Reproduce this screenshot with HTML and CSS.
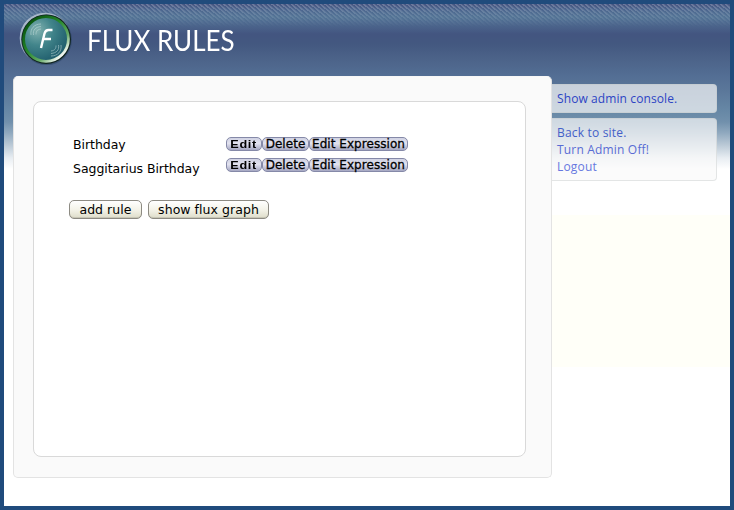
FILE: index.html
```html
<!DOCTYPE html>
<html lang="en">
<head>
<meta charset="utf-8">
<title>Flux Rules</title>
<link rel="stylesheet" href="styles.css">
</head>
<body>
<div class="page">
  <header class="header">
    <svg class="logo" viewBox="0 0 56 56" aria-hidden="true">
      <defs>
        <radialGradient id="glass" cx=".3" cy=".3" r=".75">
          <stop offset="0" stop-color="#82b2b0"/><stop offset=".45" stop-color="#42858b"/><stop offset="1" stop-color="#1f5d6c"/>
        </radialGradient>
        <linearGradient id="rim" x1=".1" y1=".1" x2=".85" y2=".9">
          <stop offset="0" stop-color="#07520d"/><stop offset=".45" stop-color="#27892c"/><stop offset=".75" stop-color="#65aa68"/><stop offset="1" stop-color="#fff"/>
        </linearGradient>
      </defs>
      <circle cx="27" cy="27" r="25.3" fill="#a9b8ca"/>
      <circle cx="28.6" cy="28.8" r="25.3" fill="#263f60" opacity=".55"/>
      <circle cx="28.2" cy="28.2" r="24.8" fill="#10251f"/>
      <circle cx="28" cy="28" r="22.4" fill="url(#glass)" stroke="url(#rim)" stroke-width="2.8"/>
      <g fill="none" stroke="#c5dedd" stroke-width=".9" opacity=".6">
        <path d="M13 24c-1-6 3-11 10-11"/><path d="M15.5 24c-1-5 2-8 7.5-8.5"/><path d="M18 23.5c0-3 1-5 5-5.5"/>
        <path d="M43 34c1 6-3 11-10 11"/><path d="M40.5 34c1 5-2 8-7.5 8.5"/><path d="M38 34.5c0 3-1 5-5 5.5"/>
      </g>
      <path d="M34.5 19h-4q-3 0-4 3.500L23 37M25.500 28h7.500" fill="none" stroke="#fff" stroke-width="2.400"/>
    </svg>
    <h1 class="title">FLUX RULES</h1>
  </header>
  <div class="columns">
    <main class="panel">
      <section class="content">
        <div class="rule"><span class="name">Birthday</span><span class="actions"><a class="pill edit"><span>Edit</span></a><a class="pill delete">Delete</a><a class="pill expression">Edit Expression</a></span></div>
        <div class="rule second"><span class="name">Saggitarius Birthday</span><span class="actions"><a class="pill edit"><span>Edit</span></a><a class="pill delete">Delete</a><a class="pill expression">Edit Expression</a></span></div>
        <div class="buttons"><button class="add">add rule</button><button class="graph">show flux graph</button></div>
      </section>
    </main>
    <aside class="side">
      <nav class="box console"><a>Show admin console.</a></nav>
      <nav class="box links"><a>Back to site.</a><a>Turn Admin Off!</a><a>Logout</a></nav>
      <div class="band"></div>
    </aside>
  </div>
</div>
</body>
</html>
```
FILE: styles.css
```css
* { box-sizing: border-box; }
body { margin: 0; background: #204b7c; }
.page {
  position: relative;
  width: 734px; height: 510px; overflow: hidden;
  border: 4px solid #204b7c;
  background: linear-gradient(#485783 0, #506b92 6px, #567798 13px, #4c668d 21px, #435580 30px, #435880 40px, #4c6389 55px, #536e94 72px, #5a7699 85px, #6687a5 106px, #7190ac 118px, #90a9bf 129px, #bac9d6 141px, #e8edf2 154px, #fff 165px);
}
.page::before {
  content: ""; position: absolute; left: 0; top: 0; width: 100%; height: 23px;
  background: repeating-linear-gradient(40deg, rgba(255,255,255,.2) 0 1px, rgba(40,60,110,.1) 2px 3.1px);
  -webkit-mask-image: linear-gradient(#000, transparent);
  mask-image: linear-gradient(#000, transparent);
}
.header { position: relative; height: 72px; display: flex; align-items: flex-start; }
.logo { width: 56px; height: 56px; margin: 7px 0 0 14px; }
.title {
  margin: 19px 0 0 12.5px; color: #fff; white-space: nowrap;
  font: 400 28px/34px Lato, sans-serif;
  transform: scaleX(.927); transform-origin: 0 0;
}
.columns { display: flex; align-items: flex-start; }
.panel {
  width: 539px; height: 402px; margin-left: 9px; padding: 24px 0 0 19px;
  background: #fafafa; border: 1px solid #e3e3e3; border-top-color: #f7f7f7; border-radius: 5px;
}
.content {
  width: 493px; height: 356px; padding: 34px 0 0 35px;
  background: #fff; border: 1px solid #d9d9d9; border-radius: 8px;
  color: #000; font: 12.5px/18px "DejaVu Sans", sans-serif;
}
.rule { display: flex; height: 22px; align-items: flex-start; }
.name { width: 153px; margin-left: 4px; white-space: nowrap; letter-spacing: -.05px; }
.second .name { padding-top: 2px; }
.actions { display: flex; padding-top: 1px; }
.second .actions { padding-top: 0; }
.pill {
  display: flex; justify-content: center;
  height: 14px; white-space: nowrap;
  border: 1px solid #8589a8; border-radius: 5px;
  background: linear-gradient(#d0d2e3, #e2e2ef 45%, #a5a7c2);
  font: 12px/12px "DejaVu Sans", sans-serif; letter-spacing: .05px; color: #000; -webkit-text-stroke: .3px #000;
}
.edit { width: 36px; font: bold 11px/12px "Liberation Sans", sans-serif; letter-spacing: .6px; -webkit-text-stroke: 0; }
.edit span { transform: scaleX(1.15); }
.delete { width: 47px; }
.expression { width: 99px; }
.buttons { display: flex; gap: 6px; margin-top: 20px; }
button {
  height: 19px; padding: 0; white-space: nowrap;
  border: 1px solid #8d8b83; border-radius: 5px;
  background: linear-gradient(#fff, #f4f3e9 50%, #deddca);
  box-shadow: inset 0 -1px #c8c6b6;
  font: 12.5px/17px "DejaVu Sans", sans-serif; letter-spacing: .05px; color: #000;
}
.add { width: 73px; }
.graph { width: 121px; }
.side { width: 178px; padding-top: 8px; }
.box {
  width: 165px; border: 1px solid rgba(190,194,195,.4); border-left: 0; border-radius: 0 4px 4px 0;
  background: rgba(250,250,250,.7); padding-left: 5px;
  font: 12px/17px "Open Sans", sans-serif; white-space: nowrap;
}
.box a { display: block; }
.console { height: 29px; padding-top: 5px; color: #2c44c4; letter-spacing: .1px; }
.links { height: 63px; margin-top: 5px; padding-top: 5px; color: #596cd4; letter-spacing: .18px; }
.links a:first-child { color: #4460c8; }
.links a:last-child { color: #6678e0; }
.band { height: 152px; margin-top: 34px; background: #fffff8; }
```
